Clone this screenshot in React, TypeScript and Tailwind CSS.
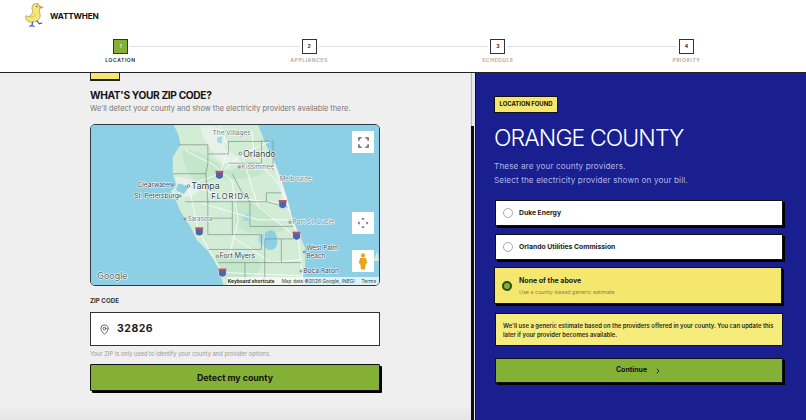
import { ChevronRight, MapPin } from "lucide-react";

const STEPS = [
  { n: 1, label: "LOCATION" },
  { n: 2, label: "APPLIANCES" },
  { n: 3, label: "SCHEDULE" },
  { n: 4, label: "PRIORITY" },
];

// ── Logo ──
const Duck = () => (
  <svg width="22" height="25" viewBox="0 0 22 25">
    <path d="M2 12.5 C4 14.5 6 13.5 7.6 11.2 C9 9.4 8.6 8 8 5.6 C7.8 2.6 9.6 0.6 12 0.6 C14.6 0.6 16 2.6 15.8 4.8 C15.6 6.6 15 8 15.8 10 C17 13.2 15.6 16.6 12.4 18.2 C9 19.8 5 19.6 3 17.6 C1.6 16.2 1.4 14 2 12.5 Z" fill="#f6e772" stroke="#8c8650" strokeWidth="0.6" />
    <path d="M15.6 2.8 L20 4.4 L15.8 5.8 Z" fill="#cf8f63" />
    <path d="M12.6 1.6 L14.6 0.2 L14.8 2 Z" fill="#cf8f63" />
    <circle cx="12.8" cy="3.4" r="0.6" fill="#222" />
    <path d="M5 13 C7 15 10 14.2 11.4 11.4" fill="none" stroke="#a39c55" strokeWidth="0.6" />
    <path d="M8.4 19 L8 22.6 M8 22.6 L5.6 23.2 M8 22.6 L10 23.4 M13 18 L15.4 20.8 M15.4 20.8 L17.8 20" fill="none" stroke="#3a3fb0" strokeWidth="1.1" strokeLinecap="round" />
  </svg>
);

const Stepper = () => (
  <div className="ml-[113px] w-[581px]">
    <div className="flex items-center">
      {STEPS.map((s, i) => (
        <div key={s.n} className={`flex items-center ${i < 3 ? "flex-1" : ""}`}>
          <div
            className={`flex h-[15px] w-[15px] shrink-0 items-center justify-center border-[1.5px] border-[#333] text-[5px] font-bold ${
              s.n === 1 ? "bg-[#84b135] text-[#dfeec0]" : "bg-white text-[#222]"
            }`}
          >
            {s.n}
          </div>
          {i < 3 && <div className="mx-[2px] h-[1.5px] flex-1 bg-[#e0e0e0]" />}
        </div>
      ))}
    </div>
    <div className="mt-[2px] flex justify-between">
      {STEPS.map((s) => (
        <div key={s.n} className="flex w-[15px] justify-center">
          <span
            className={`whitespace-nowrap text-[5px] font-semibold leading-[8px] tracking-[0.6px] ${
              s.n === 1 ? "text-[#222]" : "text-[#a8a8a8]"
            }`}
          >
            {s.label}
          </span>
        </div>
      ))}
    </div>
  </div>
);

// ── Map drawing, coordinates are 3x page px ──
const COUNTY_LINES = [
  "M280 72 H368 V128 M368 100 H430 V62 H530 M430 128 H530 V60 L565 62 V150 M262 160 H362 L368 128",
  "M362 160 L368 245 H300 M368 245 V345 M368 245 H545 M442 245 V345 M368 295 H442 M368 345 H530 V390 H370",
  "M442 160 L470 215 L495 245 V320 H540 M545 218 H590 M545 218 V245 L610 262 M540 320 H625 M540 358 H640",
  "M540 358 V490 M480 430 V490 M400 430 H650 M590 358 V430",
];

const ROADS = [
  "M405 15 L430 80 L405 160 L310 195",
  "M405 160 L470 100 L560 60",
  "M310 195 L340 335 L412 460",
  "M470 100 L520 260 L620 340",
  "M590 200 L640 350 L655 480",
  "M412 460 L650 470",
  "M310 195 L420 230 L590 250",
  "M300 90 L380 130 L440 180 L460 300 L430 420",
  "M500 30 L510 110 L580 190",
  "M350 250 L520 300 L610 300",
  "M440 350 L560 430 L650 420",
];

const Shield = ({ x, y }: { x: number; y: number }) => (
  <g transform={`translate(${x} ${y})`}>
    <path d="M-12 -12 H12 V5 C12 11 4 13 0 14 C-4 13 -12 11 -12 5 Z" fill="#4b67a8" stroke="#fff" strokeWidth="2" />
    <rect x="-12" y="-12" width="24" height="6" fill="#c9505a" />
  </g>
);

const labelCls = "fill-[#333d42] stroke-white [paint-order:stroke] [stroke-width:3px]";

const MapArt = () => (
  <svg className="block h-full w-full" viewBox="15 12 870 486" preserveAspectRatio="none">
    <rect x="0" y="0" width="900" height="510" fill="#8dd0e6" />
    <path
      d="M265 12 L280 45 L285 72 L262 110 L262 160 L272 195 L256 215 L275 250 L285 275 L315 320 L335 362 L368 395 L398 440 L415 498 L650 498 L662 440 L662 385 L642 340 L612 270 L590 200 L565 120 L535 50 L520 12 Z"
      fill="#d2ecd6"
    />
    <path d="M880 395 L885 425 L868 425 Z" fill="#d2ecd6" />
    <path d="M290 90 C340 80 400 130 430 150 C470 140 520 110 540 150 C500 190 430 170 380 180 C340 200 300 170 290 90 Z M450 250 C500 230 560 280 600 330 C560 350 480 350 450 310 Z M380 410 C430 400 520 400 530 440 C520 480 440 490 410 470 Z" fill="#c4e6ca" />
    <path d="M345 20 C390 10 430 20 420 80 C440 100 470 110 470 130 C440 140 400 130 385 100 C370 70 350 50 345 20 Z M270 170 C300 170 330 180 345 200 C340 230 300 240 280 220 Z M560 100 C580 150 600 200 620 280 C600 270 580 200 560 100 Z" fill="#e7f1ea" />
    <path d="M278 190 L312 198 L295 222 L272 210 Z" fill="#8dd0e6" />
    <path d="M540 340 C565 318 580 345 578 370 C574 400 545 395 540 380 Z" fill="#8dd0e6" />
    <path d="M475 285 L492 280 L490 305 L476 302 Z M520 350 L538 342 L535 378 L522 368 Z M395 50 L412 46 L410 68 L398 66 Z" fill="#a5d8e8" />
    {ROADS.map((d) => (
      <path key={d} d={d} fill="none" stroke="#ffffff" strokeWidth="2.5" />
    ))}
    {COUNTY_LINES.map((d) => (
      <path key={d} d={d} fill="none" stroke="#6f837a" strokeWidth="1.8" />
    ))}
    <Shield x={403} y={163} />
    <Shield x={594} y={252} />
    <Shield x={342} y={335} />
    <Shield x={636} y={348} />
    <Shield x={412} y={460} />
    <g className={labelCls} fontSize="20">
      <text x="382" y="42" className="fill-[#6d7a80]">The Villages</text>
      <text x="475" y="108" fontSize="26">Orlando</text>
      <text x="470" y="146" fontSize="19" className="fill-[#6d7a80]">Kissimmee</text>
      <text x="585" y="181" fontSize="19" className="fill-[#6d7a80]">Melbourne</text>
      <text x="155" y="200" fontSize="20">Clearwater</text>
      <text x="318" y="205" fontSize="27">Tampa</text>
      <text x="146" y="233" fontSize="20">St. Petersburg</text>
      <text x="378" y="238" fontSize="23" letterSpacing="3">FLORIDA</text>
      <text x="307" y="303" fontSize="18" className="fill-[#6d7a80]">Sarasota</text>
      <text x="623" y="314" fontSize="20" className="fill-[#6d7a80]">Port St. Lucie</text>
      <text x="666" y="393" fontSize="19">West Palm</text>
      <text x="666" y="417" fontSize="19">Beach</text>
      <text x="404" y="417" fontSize="21">Fort Myers</text>
      <text x="656" y="462" fontSize="20">Boca Raton</text>
    </g>
    <g fill="#fff" stroke="#45525a" strokeWidth="2">
      <circle cx="466" cy="99" r="4" />
      <circle cx="463" cy="139" r="3" />
      <circle cx="310" cy="197" r="4" />
      <circle cx="260" cy="194" r="3" />
      <circle cx="284" cy="227" r="3" />
      <circle cx="299" cy="297" r="3" />
      <circle cx="616" cy="308" r="3" />
      <circle cx="659" cy="398" r="3" />
      <circle cx="397" cy="411" r="3" />
      <circle cx="649" cy="456" r="3" />
    </g>
    <text x="34" y="481" fontSize="27" fill="#5f6368" stroke="#fff" strokeWidth="3" style={{ paintOrder: "stroke" }}>
      Google
    </text>
  </svg>
);

const MapButton = ({ className, children }: { className: string; children: React.ReactNode }) => (
  <div className={`absolute right-[5px] flex h-[22px] w-[22px] items-center justify-center bg-white ${className}`}>
    {children}
  </div>
);

const MapCard = () => (
  <div className="relative h-[162px] w-full overflow-hidden rounded-[5px] border-[1.5px] border-[#2c3a40]">
    <MapArt />
    <MapButton className="top-[6px]">
      <svg width="11" height="11" viewBox="0 0 12 12" fill="none" stroke="#555" strokeWidth="1.5">
        <path d="M1 4 V1 H4 M8 1 H11 V4 M11 8 V11 H8 M4 11 H1 V8" />
      </svg>
    </MapButton>
    <MapButton className="top-[87px]">
      <svg width="12" height="12" viewBox="0 0 12 12" fill="#666">
        <path d="M6 0.5 L7.8 2.6 H4.2 Z M6 11.5 L4.2 9.4 H7.8 Z M0.5 6 L2.6 4.2 V7.8 Z M11.5 6 L9.4 7.8 V4.2 Z" />
      </svg>
    </MapButton>
    <MapButton className="top-[125px]">
      <svg width="10" height="17" viewBox="0 0 10 17" fill="#e8a51c">
        <circle cx="5" cy="2.4" r="2.1" />
        <path d="M2 5 H8 L9.3 10.5 H7.8 L7 16.5 H3 L2.2 10.5 H0.7 Z" />
      </svg>
    </MapButton>
    <div className="absolute bottom-0 right-0 flex h-[8px] items-center gap-[7px] bg-white/70 pl-[1px] pr-[3px] text-[4.9px] leading-none text-[#444]">
      <span className="font-semibold text-[#111]">Keyboard shortcuts</span>
      <span>Map data ©2026 Google, INEGI</span>
      <span>Terms</span>
    </div>
  </div>
);

const Radio = ({ label }: { label: string }) => (
  <div className="flex h-[26px] w-[288px] items-center gap-[6px] border border-[#111] bg-white pl-[7px] shadow-[2px_2px_0_#000]">
    <div className="h-[10px] w-[10px] rounded-full border border-[#aaa] bg-white" />
    <span className="text-[6.8px] font-bold text-[#222]">{label}</span>
  </div>
);

export default function App() {
  return (
    <div className="flex h-[420px] w-[806px] flex-col overflow-hidden bg-white [font-family:Inter,sans-serif]">
      {/* Header */}
      <header className="h-[73px] shrink-0 border-b border-[#222] bg-white">
        <div className="flex h-[39px] items-start gap-[4px] pl-[24px] pt-[3px]">
          <Duck />
          <span className="mt-[7px] text-[8.2px] font-bold leading-[12px] tracking-[-0.2px] text-[#111]">WATTWHEN</span>
        </div>
        <Stepper />
      </header>

      <div className="flex min-h-0 flex-1">
        {/* Left: zip form */}
        <section className="h-full w-[470px] shrink-0 overflow-hidden bg-gradient-to-b from-[#efefef] from-[96%] to-[#e6e6e6] pl-[90px] pr-[90px]">
          <div className="h-[8px] w-[30px] rounded-b-[1px] border-x-[1.5px] border-b-2 border-[#222] bg-[#f5e76e]" />
          <h2 className="mt-[7px] text-[10.2px] font-bold leading-[14px] tracking-[-0.35px] text-[#151515]">WHAT'S YOUR ZIP CODE?</h2>
          <p className="mt-[1px] whitespace-nowrap text-[7.4px] leading-[12px] text-[#777]">
            We'll detect your county and show the electricity providers available there.
          </p>
          <div className="mt-[9px]">
            <MapCard />
          </div>
          <label className="mt-[11px] block text-[6.2px] font-bold leading-[8px] text-[#333]">ZIP CODE</label>
          <div className="mt-[7px] flex h-[34px] items-center gap-[7px] border-[1.5px] border-[#333] bg-white pl-[8px]">
            <MapPin size={11} strokeWidth={1.6} className="text-[#333]" />
            <span className="text-[10.5px] font-bold tracking-[0.5px] text-[#222]">32826</span>
          </div>
          <p className="mt-[4px] text-[5.8px] leading-[8px] text-[#999]">Your ZIP is only used to identify your county and provider options.</p>
          <button className="mt-[6px] flex h-[27px] w-full items-center justify-center rounded-[1px] border border-[#111] bg-[#84b135] text-[8.8px] font-bold text-[#111] shadow-[2px_2px_0_#000]">
            Detect my county
          </button>
        </section>

        {/* Scrollbar */}
        <div className="flex w-[5px] shrink-0 flex-col bg-[#e8e8e8] px-[1px]">
          <div className="h-[53px] border-l border-[#b5b5b5]" />
          <div className="flex-1 bg-[#0d0d0d]" />
        </div>

        {/* Right: county result */}
        <section className="min-w-0 flex-1 border-l border-[#111] bg-[#1a1f8f] pl-[18px]">
          <div className="mt-[23px] flex h-[17px] w-[64px] items-center justify-center border border-[#111] bg-[#f5e76e] text-[5.9px] font-bold text-[#111]">
            LOCATION FOUND
          </div>
          <h1 className="mt-[10px] text-[23px] font-light leading-[30px] tracking-[-0.9px] text-white">ORANGE COUNTY</h1>
          <p className="mt-[6px] text-[8.2px] leading-[14px] tracking-[0.1px] text-[#aeb4e8]">
            These are your county providers.
            <br />
            Select the electricity provider shown on your bill.
          </p>
          <div className="ml-px mt-[13px] flex flex-col gap-[8px]">
            <Radio label="Duke Energy" />
            <Radio label="Orlando Utilities Commission" />
          </div>
          <div className="mt-[7px] flex h-[37px] w-[288px] items-center gap-[7px] border border-[#111] bg-[#f5e76e] pl-[7px] shadow-[2px_2px_0_#000]">
            <div className="h-[10px] w-[10px] rounded-full border-2 border-[#2f4a1c] bg-[#84b135]" />
            <div>
              <div className="text-[7px] font-bold leading-[10px] text-[#222]">None of the above</div>
              <div className="mt-[2px] text-[5.4px] leading-[8px] text-[#8a8650]">Use a county-based generic estimate</div>
            </div>
          </div>
          <div className="ml-px mt-[9px] flex h-[33px] w-[288px] items-center border border-[#111] bg-[#f6ec7c] pl-[7px] pr-[3px] text-[5.9px] font-semibold leading-[9px] text-[#2a2a20]">
            We'll use a generic estimate based on the providers offered in your county. You can update this later if your provider becomes available.
          </div>
          <button className="ml-px mt-[12px] flex h-[25px] w-[288px] items-center justify-center gap-[7px] border border-[#111] bg-[#84b135] text-[7px] font-bold text-[#111] shadow-[2px_2px_0_#000]">
            Continue
            <ChevronRight size={8} strokeWidth={2.5} />
          </button>
        </section>
      </div>
    </div>
  );
}
